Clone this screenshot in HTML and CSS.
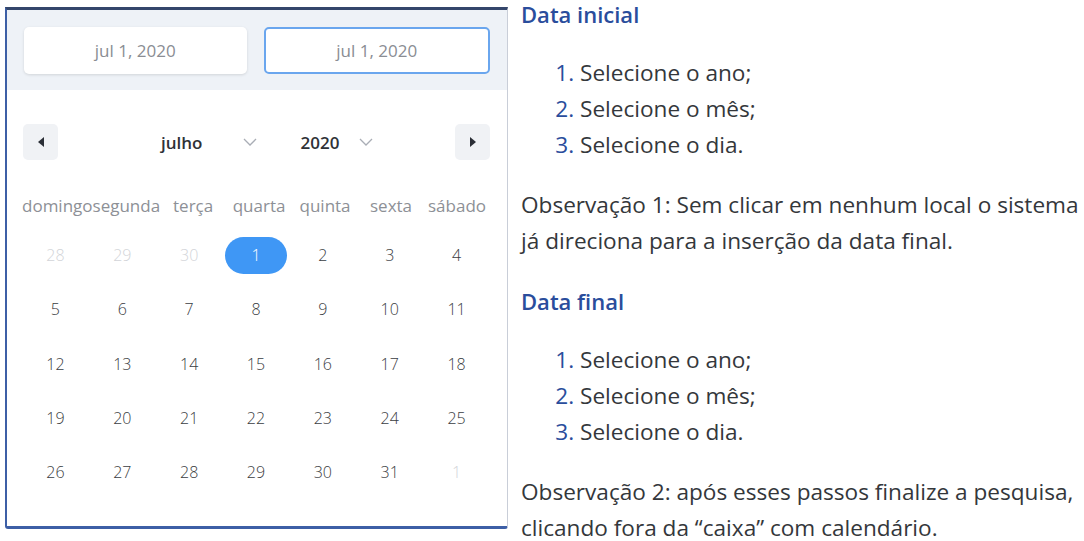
FILE: index.html
```html
<!DOCTYPE html>
<html lang="pt-BR">
<head>
  <meta charset="UTF-8">
  <title>Calendário</title>
  <link rel="stylesheet" href="styles.css">
</head>
<body>
  <div class="page">
    <div class="calendar">
      <div class="cal-head">
        <div class="date-input">jul 1, 2020</div>
        <div class="date-input active">jul 1, 2020</div>
      </div>
      <div class="cal-body">
        <div class="cal-nav">
          <button class="nav-btn" type="button">
            <svg width="10" height="12" viewBox="0 0 10 12"><path d="M8 1 L2 6 L8 11 Z" fill="#2b2f36"/></svg>
          </button>
          <div class="pickers">
            <div class="picker month">
              <span>julho</span>
              <svg width="14" height="8" viewBox="0 0 14 8"><path d="M1 1 L7 7 L13 1" fill="none" stroke="#a9adb5" stroke-width="1.3"/></svg>
            </div>
            <div class="picker year">
              <span>2020</span>
              <svg width="14" height="8" viewBox="0 0 14 8"><path d="M1 1 L7 7 L13 1" fill="none" stroke="#a9adb5" stroke-width="1.3"/></svg>
            </div>
          </div>
          <button class="nav-btn" type="button">
            <svg width="10" height="12" viewBox="0 0 10 12"><path d="M2 1 L8 6 L2 11 Z" fill="#2b2f36"/></svg>
          </button>
        </div>

        <div class="weekdays">
          <span>domingo</span><span>segunda</span><span>terça</span><span>quarta</span><span>quinta</span><span>sexta</span><span>sábado</span>
        </div>

        <div class="days">
          <span class="muted">28</span><span class="muted">29</span><span class="muted">30</span><span><b class="selected">1</b></span><span>2</span><span>3</span><span>4</span>
          <span>5</span><span>6</span><span>7</span><span>8</span><span>9</span><span>10</span><span>11</span>
          <span>12</span><span>13</span><span>14</span><span>15</span><span>16</span><span>17</span><span>18</span>
          <span>19</span><span>20</span><span>21</span><span>22</span><span>23</span><span>24</span><span>25</span>
          <span>26</span><span>27</span><span>28</span><span>29</span><span>30</span><span>31</span><span class="muted">1</span>
        </div>
      </div>
    </div>

    <div class="notes">
      <h3>Data inicial</h3>
      <ol>
        <li>Selecione o ano;</li>
        <li>Selecione o mês;</li>
        <li>Selecione o dia.</li>
      </ol>
      <p>
        <span>Observação 1: Sem clicar em nenhum local o sistema</span>
        <span>já direciona para a inserção da data final.</span>
      </p>

      <h3>Data final</h3>
      <ol>
        <li>Selecione o ano;</li>
        <li>Selecione o mês;</li>
        <li>Selecione o dia.</li>
      </ol>
      <p>
        <span>Observação 2: após esses passos finalize a pesquisa,</span>
        <span>clicando fora da “caixa” com calendário.</span>
      </p>
    </div>
  </div>
</body>
</html>
```

FILE: styles.css
```css
body {
  margin: 0;
  background-color: #fff;
  font-family: "Open Sans", "Noto Sans", sans-serif;
  overflow: hidden;
}

.page {
  display: flex;
  align-items: flex-start;
  height: 100vh;
  overflow: hidden;
}

/* calendar popup */
.calendar {
  margin: 7px 0 0 5px;
  width: 500px;
  height: 516px;
  flex-shrink: 0;
  border-top: 3px solid #34466b;
  border-left: 2px solid #3d5fa6;
  border-bottom: 3px solid #3d5fa6;
  border-right: 1px solid #c9ced8;
  border-radius: 0 0 3px 3px;
  background-color: #fff;
}

.cal-head {
  display: flex;
  gap: 17px;
  padding: 17px 17px 16px;
  background-color: #eef2f7;
}

.date-input {
  flex: 1;
  height: 47px;
  box-sizing: border-box;
  display: flex;
  align-items: center;
  justify-content: center;
  background-color: #fff;
  border-radius: 5px;
  box-shadow: 0 1px 3px rgba(0, 0, 0, 0.12);
  color: #8a8d93;
  font-size: 17px;
}

.date-input.active {
  border: 2px solid #6aa6ee;
  box-shadow: none;
}

.cal-body {
  padding: 34px 17px 0 16px;
}

.cal-nav {
  display: flex;
  align-items: center;
  height: 36px;
}

.nav-btn {
  width: 35px;
  height: 36px;
  padding: 0;
  border: none;
  border-radius: 5px;
  background-color: #f0f2f5;
  display: flex;
  align-items: center;
  justify-content: center;
  cursor: pointer;
}

.pickers {
  display: flex;
  align-items: center;
  margin-left: 103px;
  margin-right: auto;
  color: #2f3237;
  font-size: 17px;
  font-weight: 600;
}

.picker {
  display: flex;
  align-items: center;
}

.month svg {
  margin-left: 41px;
}

.year {
  margin-left: 43px;
}

.year svg {
  margin-left: 20px;
}

.weekdays,
.days {
  display: grid;
  grid-template-columns: repeat(7, 1fr);
  width: 468px;
  margin-left: -1px;
}

.weekdays {
  margin-top: 25px;
  height: 40px;
  align-items: center;
  color: #8d9096;
  font-size: 17px;
}

.weekdays span {
  text-align: center;
  white-space: nowrap;
  justify-self: center;
}

.days {
  margin-top: 3px;
  grid-auto-rows: 54.25px;
  font-size: 16px;
  font-weight: 300;
  color: #3a3d42;
}

.days span {
  display: flex;
  align-items: center;
  justify-content: center;
}

.days .muted {
  color: #d2d4d8;
}

.selected {
  width: 62px;
  height: 37px;
  border-radius: 19px;
  background-color: #3f97f5;
  color: #fff;
  font-weight: 300;
  display: flex;
  align-items: center;
  justify-content: center;
}

/* instructions */
.notes {
  margin-left: 13px;
  width: 580px;
  flex-shrink: 0;
  color: #34373b;
  font-size: 22.6px;
}

.notes h3 {
  margin: 0 0 27px;
  line-height: 28px;
  font-size: 22px;
  font-weight: 600;
  color: #2a4d9c;
}

.notes ol {
  margin: 0 0 24px;
  padding-left: 59px;
  line-height: 36px;
}

.notes li::marker {
  color: #2a4d9c;
}

.notes p {
  margin: 0 0 28px;
  padding: 5px 0;
}

.notes p span {
  display: block;
  line-height: 26px;
  white-space: nowrap;
}

.notes p span + span {
  margin-top: 10px;
}

.notes p:last-child {
  margin-bottom: 0;
  padding-bottom: 0;
}
```
